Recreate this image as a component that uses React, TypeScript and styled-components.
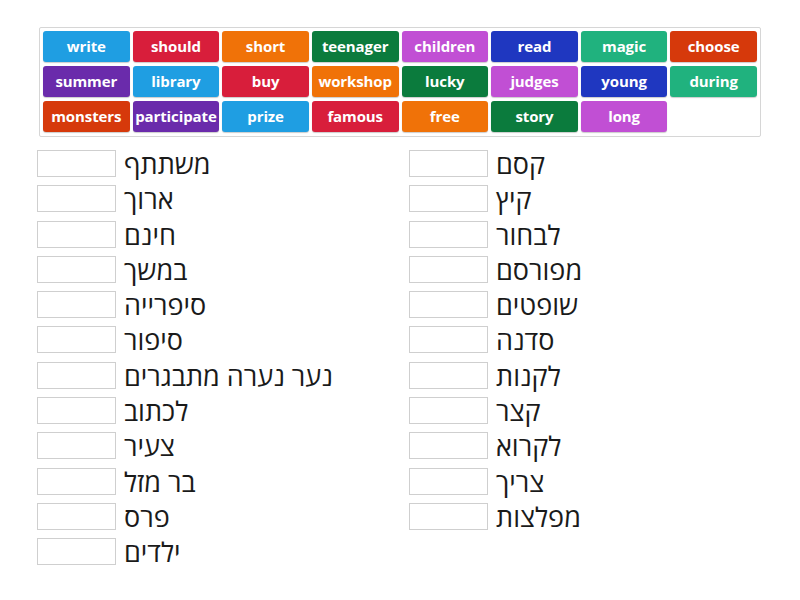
import styled, { createGlobalStyle } from "styled-components";

const GlobalStyle = createGlobalStyle`
  body {
    margin: 0;
    background: #fff;
    font-family: "Open Sans", "Noto Sans", sans-serif;
  }
`;

const palette = [
  "#1f9ee2",
  "#d81e3b",
  "#f07208",
  "#0b7b3d",
  "#c14fd4",
  "#1f37c0",
  "#20b27e",
  "#d6390b",
  "#6a2bab",
];

const tiles = [
  "write", "should", "short", "teenager", "children", "read", "magic", "choose",
  "summer", "library", "buy", "workshop", "lucky", "judges", "young", "during",
  "monsters", "participate", "prize", "famous", "free", "story", "long",
];

const leftWords = [
  "משתתף",
  "ארוך",
  "חינם",
  "במשך",
  "סיפרייה",
  "סיפור",
  "נער נערה מתבגרים",
  "לכתוב",
  "צעיר",
  "בר מזל",
  "פרס",
  "ילדים",
];

const rightWords = [
  "קסם",
  "קיץ",
  "לבחור",
  "מפורסם",
  "שופטים",
  "סדנה",
  "לקנות",
  "קצר",
  "לקרוא",
  "צריך",
  "מפלצות",
];

const Page = styled.div`
  padding: 27px 0 0 37px;
  width: 800px;
  height: 600px;
  box-sizing: border-box;
`;

const TileBank = styled.div`
  margin-left: 2px;
  width: 722px;
  box-sizing: border-box;
  border: 1px solid #d6d6d6;
  border-radius: 2px;
  padding: 3px 3px 4px 3px;
  display: grid;
  grid-template-columns: repeat(8, 1fr);
  column-gap: 3px;
  row-gap: 4px;
`;

const Tile = styled.div<{ $bg: string }>`
  height: 31px;
  padding-bottom: 2px;
  box-sizing: border-box;
  background: ${(p) => p.$bg};
  border-radius: 3px;
  box-shadow: 0 1px 1px rgba(0, 0, 0, 0.2);
  color: #fff;
  font-weight: 700;
  font-size: 15px;
  display: flex;
  align-items: center;
  justify-content: center;
  white-space: nowrap;
  letter-spacing: -0.1px;
`;

const Answers = styled.div`
  margin-top: 13px;
  display: grid;
  grid-template-columns: 372px 1fr;
`;

const Column = styled.div`
  display: flex;
  flex-direction: column;
  gap: 8.3px;
`;

const Row = styled.div`
  display: flex;
  align-items: center;
  gap: 8px;
  height: 27px;
`;

const Slot = styled.div`
  width: 79px;
  height: 27px;
  box-sizing: border-box;
  border: 1px solid #cfcfcf;
  background: #fff;
`;

const Word = styled.span`
  font-size: 27px;
  color: #1a1a1a;
  line-height: 27px;
  white-space: nowrap;
`;

function AnswerColumn({ words }: { words: string[] }) {
  return (
    <Column>
      {words.map((w) => (
        <Row key={w}>
          <Slot />
          <Word>{w}</Word>
        </Row>
      ))}
    </Column>
  );
}

export default function App() {
  return (
    <>
      <GlobalStyle />
      <Page>
        <TileBank>
          {tiles.map((t, i) => (
            <Tile key={t} $bg={palette[i % palette.length]}>
              {t}
            </Tile>
          ))}
        </TileBank>
        <Answers>
          <AnswerColumn words={leftWords} />
          <AnswerColumn words={rightWords} />
        </Answers>
      </Page>
    </>
  );
}
